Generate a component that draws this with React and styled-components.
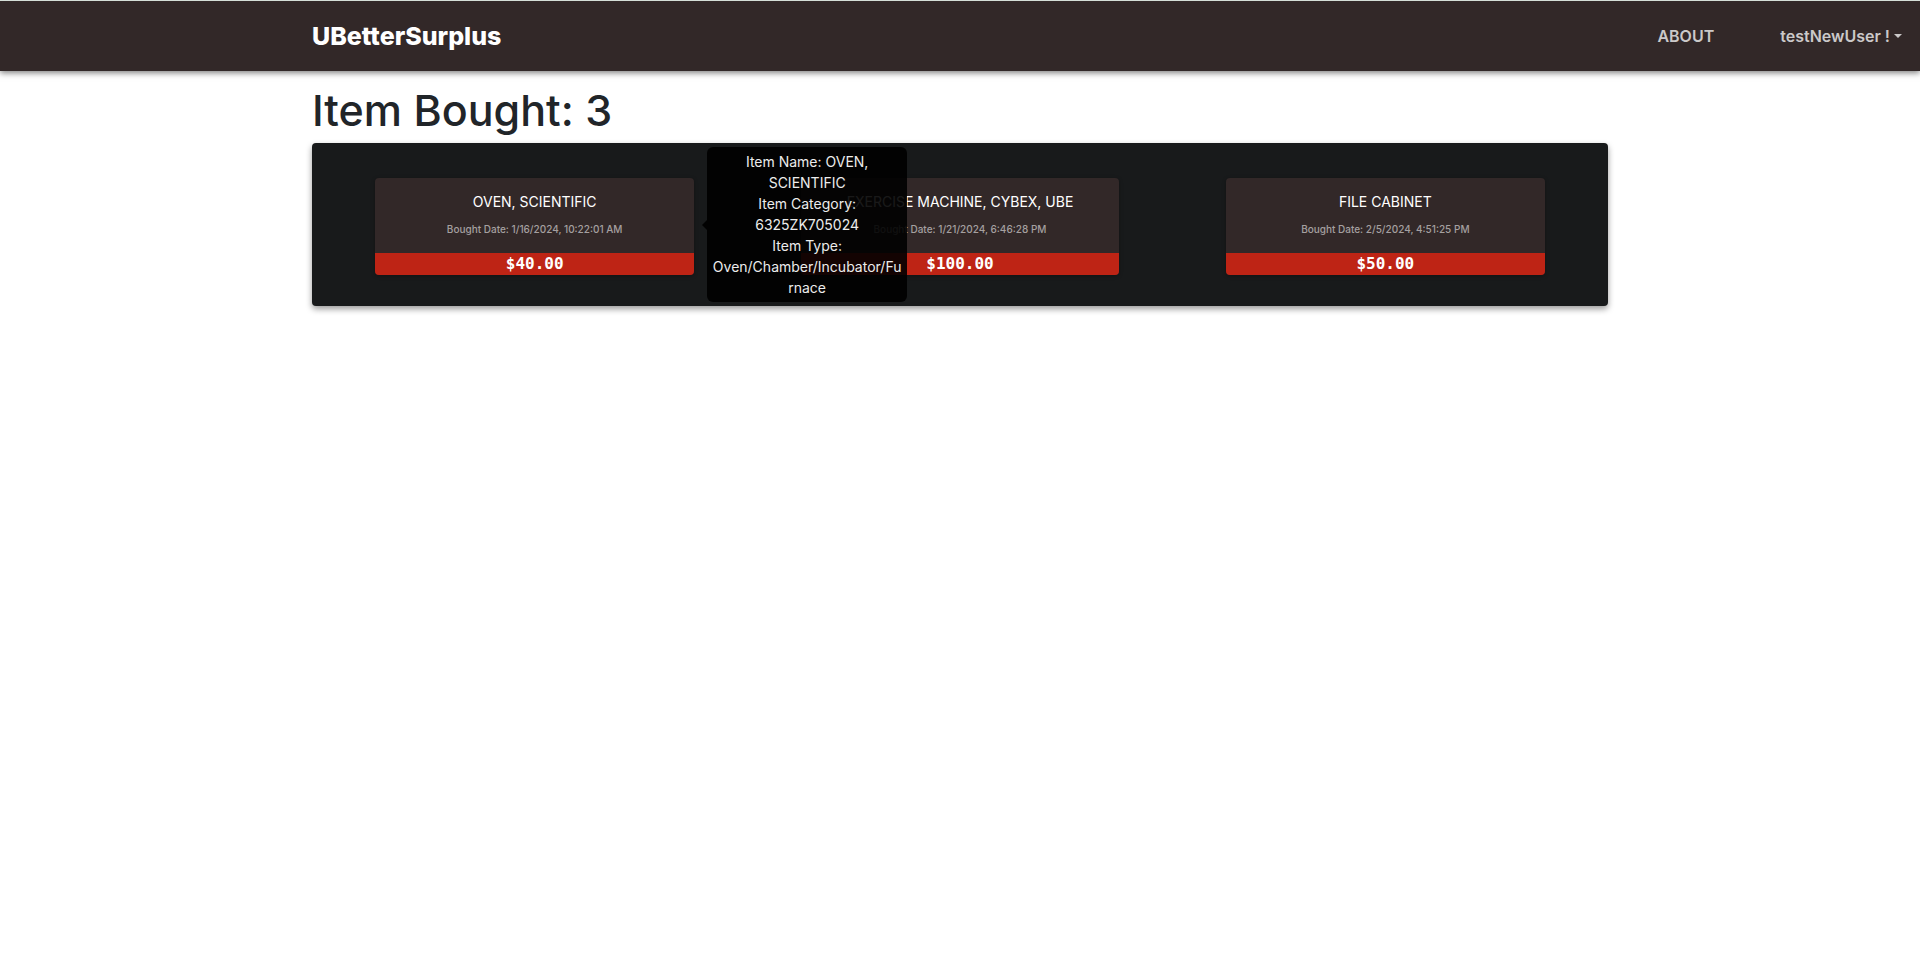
import React from "react";
import styled, { createGlobalStyle } from "styled-components";

const GlobalStyle = createGlobalStyle`
  *, *::before, *::after { box-sizing: border-box; }
  body {
    margin: 0;
    background: #fff;
    color: #212529;
    font-family: Inter, "Open Sans", sans-serif;
    font-size: 16px;
    line-height: 24px;
  }
`;

const Navbar = styled.nav`
  display: grid;
  grid-template-columns: 1fr minmax(0, 1296px) 1fr;
  align-items: center;
  height: 71px;
  border-top: 1px solid #d5dfd8;
  background: #322828;
  box-shadow: 0 2px 6px rgba(0, 0, 0, 0.5);
`;

const Brand = styled.a`
  grid-column: 2;
  grid-row: 1;
  justify-self: start;
  color: #fff;
  font-size: 25px;
  line-height: 32px;
  font-weight: 800;
  text-decoration: none;
`;

const NavActions = styled.div`
  grid-column: 2 / 4;
  grid-row: 1;
  justify-self: end;
  display: flex;
  align-items: center;
  gap: 66px;
  padding-right: 18px;
`;

const NavLink = styled.a`
  color: #cbc9c9;
  font-size: 16px;
  font-weight: 600;
  text-decoration: none;
`;

const UserMenu = styled.button`
  display: flex;
  align-items: center;
  gap: 4px;
  padding: 0;
  border: 0;
  background: none;
  color: #cbc9c9;
  font: inherit;
  font-weight: 600;
  cursor: pointer;

  &::after {
    content: "";
    border-top: 4px solid;
    border-left: 4px solid transparent;
    border-right: 4px solid transparent;
  }
`;

const Page = styled.main`
  max-width: 1320px;
  margin: 0 auto;
  padding: 16px 12px;
`;

const Heading = styled.h1`
  margin: 0 0 10px;
  font-size: 43px;
  line-height: 46px;
  font-weight: 500;
`;

const Panel = styled.section`
  display: grid;
  grid-template-columns: repeat(3, 1fr);
  justify-items: center;
  padding: 35px 10px 31px;
  border-radius: 4px;
  background: #181a1b;
  box-shadow: 0 3px 6px rgba(0, 0, 0, 0.4);
`;

const Card = styled.article`
  position: relative;
  width: 75%;
  border-radius: 4px;
  background: #322828;
  box-shadow: 0 1px 4px rgba(0, 0, 0, 0.3);
  text-align: center;
`;

const CardBody = styled.div`
  padding: 12px 16px 16px;
`;

const CardTitle = styled.h2`
  margin: 0 0 7px;
  color: #fff;
  font-size: 14px;
  line-height: 24px;
  font-weight: 400;
  white-space: nowrap;
`;

const BoughtDate = styled.p`
  margin: 0;
  color: #a5a0a0;
  font-size: 10px;
  line-height: 16px;
  font-weight: 500;
`;

const Price = styled.div`
  border-radius: 0 0 4px 4px;
  background: #be2415;
  color: #fff;
  font-family: "DejaVu Sans Mono", monospace;
  font-size: 16px;
  line-height: 22px;
  font-weight: 700;
`;

const Tooltip = styled.div`
  position: absolute;
  z-index: 1;
  top: -31px;
  left: 100%;
  width: 200px;
  margin-left: 13px;
  padding: 4px;
  border-radius: 6px;
  background: rgba(0, 0, 0, 0.9);
  color: #ececec;
  font-size: 14px;
  line-height: 21px;
  overflow-wrap: break-word;

  &::before {
    content: "";
    position: absolute;
    top: 50%;
    right: 100%;
    transform: translateY(-50%);
    border-top: 5px solid transparent;
    border-bottom: 5px solid transparent;
    border-right: 5px solid rgba(0, 0, 0, 0.9);
  }
`;

const items = [
  {
    name: "OVEN, SCIENTIFIC",
    date: "1/16/2024, 10:22:01 AM",
    price: "$40.00",
    category: "6325ZK705024",
    type: "Oven/Chamber/Incubator/Furnace",
    open: true,
  },
  { name: "EXERCISE MACHINE, CYBEX, UBE", date: "1/21/2024, 6:46:28 PM", price: "$100.00" },
  { name: "FILE CABINET", date: "2/5/2024, 4:51:25 PM", price: "$50.00" },
];

function ItemCard({ item }) {
  return (
    <Card>
      <CardBody>
        <CardTitle>{item.name}</CardTitle>
        <BoughtDate>Bought Date: {item.date}</BoughtDate>
      </CardBody>
      <Price>{item.price}</Price>
      {item.open && (
        <Tooltip role="tooltip">
          <div>Item Name: {item.name}</div>
          <div>Item Category: {item.category}</div>
          <div>Item Type: {item.type}</div>
        </Tooltip>
      )}
    </Card>
  );
}

export default function App() {
  return (
    <>
      <GlobalStyle />
      <Navbar>
        <Brand href="#">UBetterSurplus</Brand>
        <NavActions>
          <NavLink href="#about">ABOUT</NavLink>
          <UserMenu type="button" aria-haspopup="menu">testNewUser !</UserMenu>
        </NavActions>
      </Navbar>
      <Page>
        <Heading>Item Bought: {items.length}</Heading>
        <Panel>
          {items.map((item) => (
            <ItemCard key={item.name} item={item} />
          ))}
        </Panel>
      </Page>
    </>
  );
}
